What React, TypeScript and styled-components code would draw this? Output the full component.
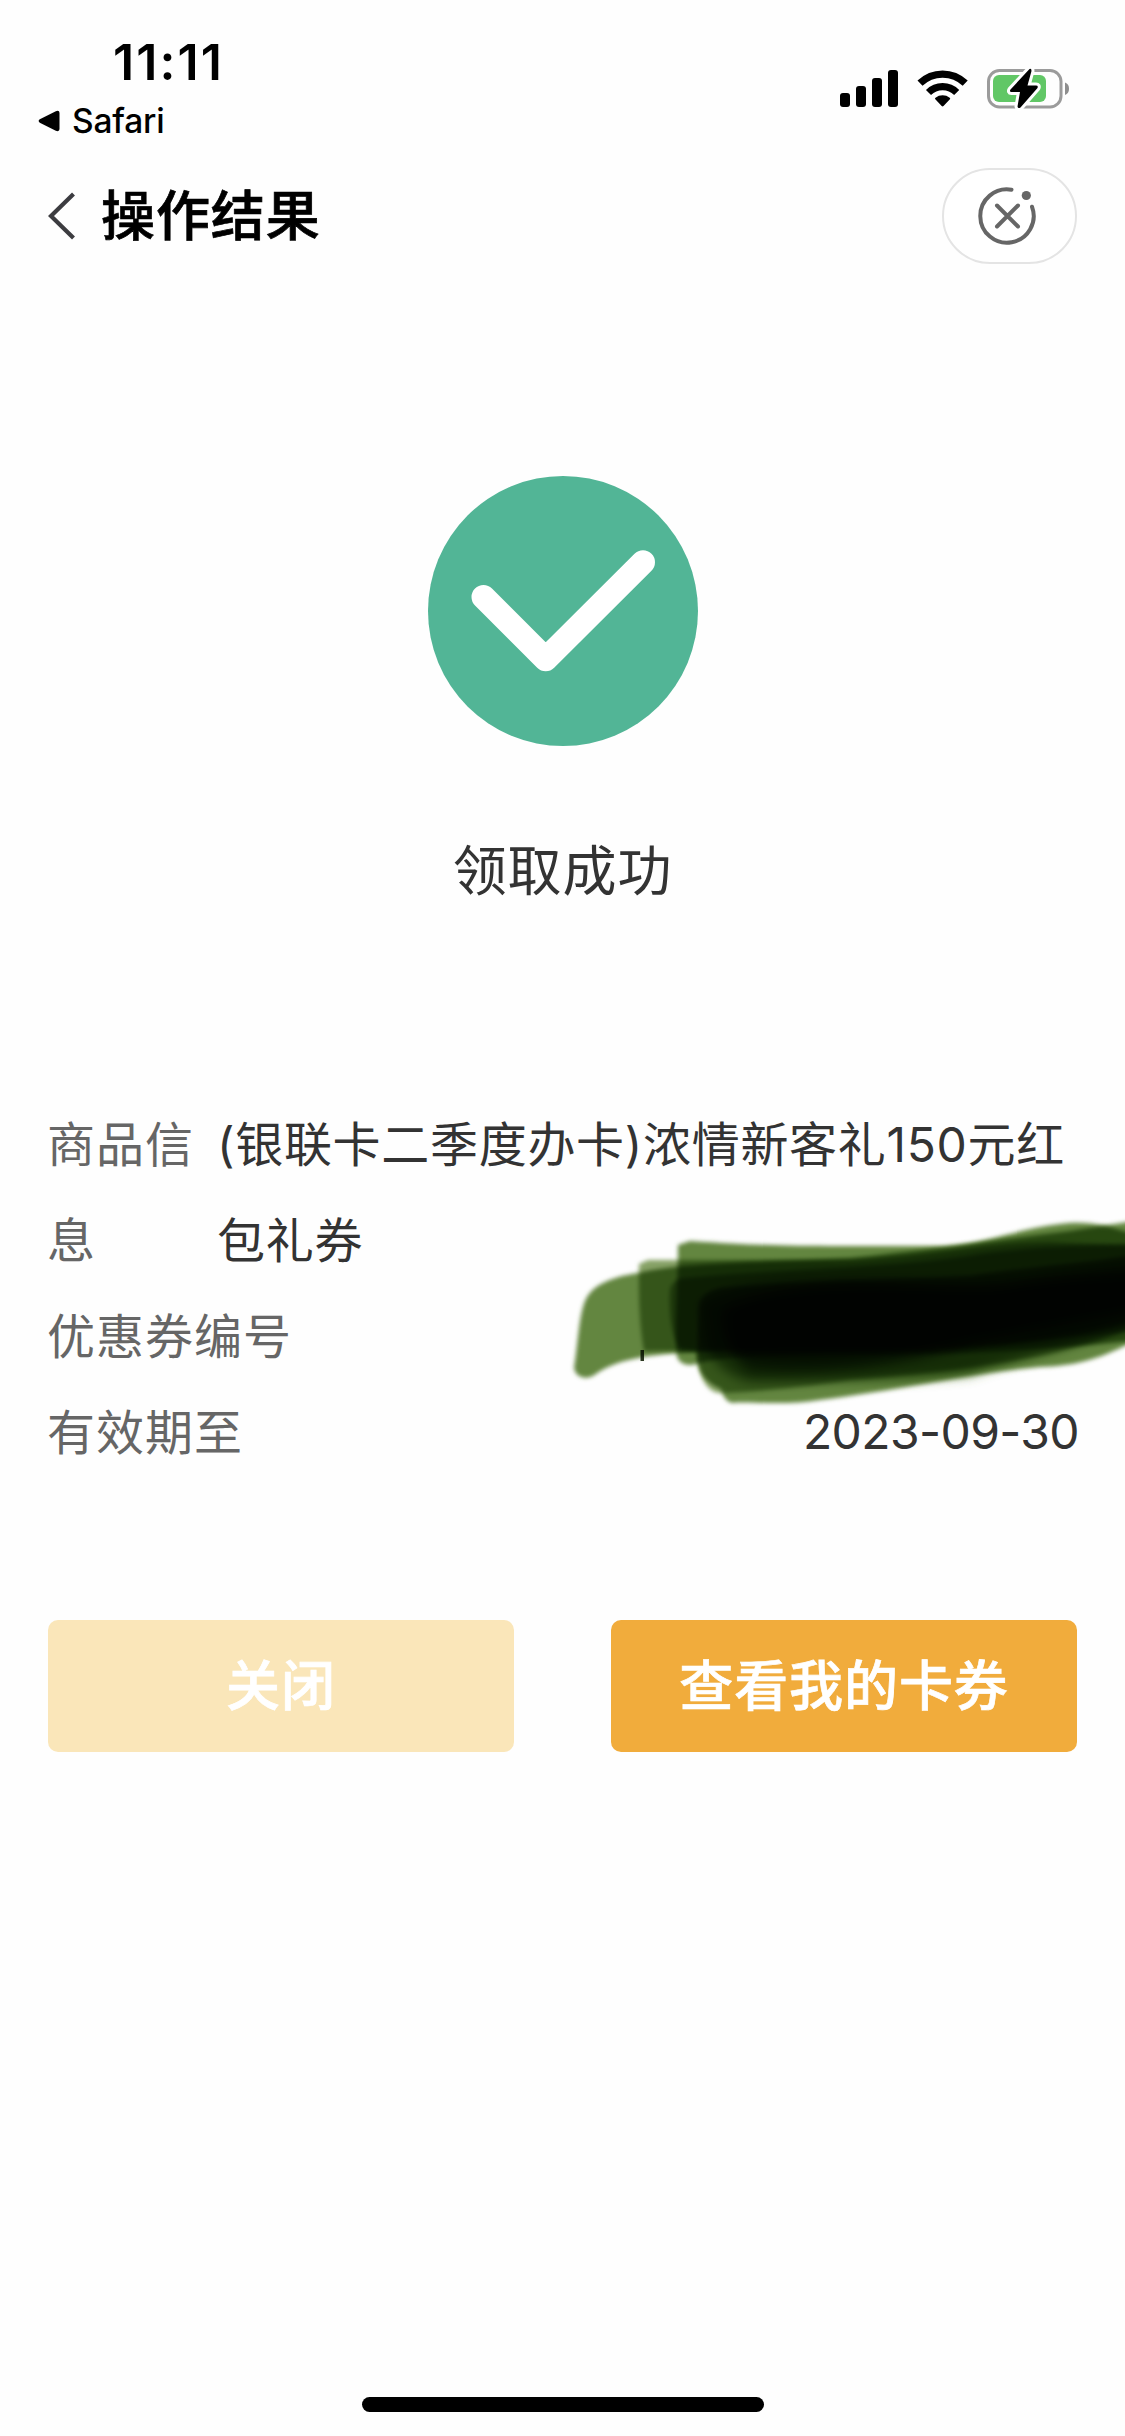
import React from 'react';
import styled, { createGlobalStyle } from 'styled-components';

const GlobalStyle = createGlobalStyle`
  * { box-sizing: border-box; }
  html, body { margin: 0; padding: 0; background: #fefefe; }
  body { font-family: Inter, "Noto Sans CJK SC", sans-serif; color: #333; }
`;

const Screen = styled.main`
  width: 1125px;
  height: 2436px;
  display: flex;
  flex-direction: column;
  background: #fefefe;
  overflow: hidden;
`;

const StatusBar = styled.header`
  display: flex;
  justify-content: space-between;
  align-items: flex-start;
  height: 150px;
  padding: 32px 55px 0 38px;
  color: #000;
`;

const StatusLeft = styled.div`
  display: flex;
  flex-direction: column;
`;

const Clock = styled.time`
  padding-left: 75px;
  font-size: 50px;
  font-weight: 600;
  line-height: 60px;
  letter-spacing: 2.1px;
`;

const BackToApp = styled.div`
  display: flex;
  align-items: center;
  gap: 12px;
  height: 56px;
  padding-top: 1px;
  font-size: 33.5px;
  font-weight: 450;
  line-height: 56px;
  letter-spacing: -0.2px;
`;

const StatusIcons = styled.div`
  display: flex;
  align-items: flex-start;
  padding-top: 36px;
`;

const NavBar = styled.nav`
  display: flex;
  align-items: center;
  height: 132px;
  padding: 0 48px;
`;

const Title = styled.h1`
  flex: 1;
  margin: 2px 0 0 25px;
  color: #000;
  font-size: 54px;
  font-weight: 500;
  line-height: 80px;
  letter-spacing: 0.9px;
  -webkit-text-stroke: 0.7px currentColor;
`;

const Capsule = styled.button`
  display: flex;
  align-items: center;
  justify-content: center;
  width: 135px;
  height: 96px;
  padding: 0 6px 0 0;
  border: 2px solid #e4e4e4;
  border-radius: 48px;
  background: #fff;
`;

const Result = styled.section`
  display: flex;
  flex-direction: column;
  align-items: center;
  padding-top: 194px;
  height: 815px;
`;

const ResultText = styled.p`
  margin: 86px 0 0;
  font-size: 54px;
  line-height: 80px;
  letter-spacing: 0.9px;
`;

const Details = styled.dl`
  position: relative;
  display: flex;
  flex-direction: column;
  margin: 0;
  padding: 0 48px 0 47px;
  font-size: 48px;
  line-height: 96px;
`;

const Row = styled.div`
  display: flex;
  justify-content: space-between;
`;

const Label = styled.dt<{ $width?: number }>`
  width: ${(p) => (p.$width ? `${p.$width}px` : 'auto')};
  flex: none;
  color: #666;
  letter-spacing: 1px;
`;

const Value = styled.dd<{ $wide?: boolean }>`
  margin: 0;
  width: ${(p) => (p.$wide ? '860px' : 'auto')};
  letter-spacing: 0.7px;
`;

const DateText = styled.time`
  display: block;
  margin: -1px -2px 0 0;
  font-size: 48px;
  letter-spacing: -0.6px;
`;

const Scribble = styled.svg`
  position: absolute;
  left: 560px;
  top: 103px;
  isolation: isolate;
  path { mix-blend-mode: multiply; }
`;

const Actions = styled.div`
  display: flex;
  gap: 97px;
  padding: 139px 48px 0;
`;

const ActionButton = styled.button<{ $muted?: boolean }>`
  flex: 1;
  height: 132px;
  padding: 0 0 7px;
  border: 0;
  border-radius: 10px;
  background: ${(p) => (p.$muted ? '#fae6b9' : '#f1ac3c')};
  color: #fff;
  font-family: inherit;
  font-size: 54px;
  font-weight: 500;
  letter-spacing: 0.9px;
  -webkit-text-stroke: 0.7px currentColor;
`;

const HomeIndicator = styled.div`
  width: 402px;
  height: 15px;
  margin: auto auto 24px;
  border-radius: 8px;
  background: #000;
`;

const StatusGlyphs = () => (
  <svg width="230" height="44" viewBox="0 0 230 44">
    <rect x="0" y="25" width="10" height="14" rx="3" />
    <rect x="16" y="18" width="10" height="21" rx="3" />
    <rect x="32" y="10" width="10" height="29" rx="3" />
    <rect x="48" y="2" width="10" height="37" rx="3" />
    <g fill="none" stroke="#000" strokeWidth="7.2">
      <path d="M80 15.2A32.5 32.5 0 0 1 125.200 15.200" />
      <path d="M88.500 24.500A20 20 0 0 1 116.700 24.500" />
    </g>
    <path d="M95.300 31.300Q94.500 30.500 95.500 29.700A11.500 11.500 0 0 1 109.700 29.700Q110.700 30.500 109.900 31.300L103.500 38Q102.600 38.800 101.700 38Z" />
    <rect x="148.500" y="2.500" width="72.500" height="36.500" rx="11" fill="none" stroke="#9b9b9b" strokeWidth="3" />
    <path d="M225 14.500Q229 16 229 20.700Q229 25.500 225 27Z" fill="#8e8e8e" />
    <rect x="153" y="7" width="53" height="27" rx="6" fill="#61c766" />
    <path
      d="M189.500 1L170.500 21.500Q169 24 171.500 24H180L177.500 38.500Q178 41 180.500 39.500L197.500 20Q198.500 17.500 196 17.500H187.500L191.500 3Q191.500 0 189.500 1Z"
      stroke="#fff"
      strokeWidth="6"
      paintOrder="stroke"
      strokeLinejoin="round"
    />
  </svg>
);

const BackTriangle = () => (
  <svg width="22" height="22" viewBox="0 0 22 22">
    <path d="M1.800 9.300L17.800 1.200Q21.500 0 21.500 3V19Q21.500 22 17.800 20.800L1.800 12.700Q-.5 11 1.800 9.300Z" />
  </svg>
);

const Chevron = () => (
  <svg width="28" height="48" viewBox="0 0 28 48" fill="none" stroke="#3c3c40" strokeWidth="4.200">
    <path d="M25.500 2L3 24L25.500 46" />
  </svg>
);

const CloseRing = () => (
  <svg width="60" height="60" viewBox="-30 -30 60 60" fill="none" stroke="#666" strokeWidth="4" strokeLinecap="round">
    <path d="M4.500 -26.300A26.700 26.700 0 1 0 25 -9.300" />
    <path d="M-10 -10.500L11 10.500M11 -10.500L-10 10.500" />
    <circle cx="19.300" cy="-20.500" r="4.600" fill="#666" stroke="none" />
  </svg>
);

const SuccessMark = () => (
  <svg width="270" height="270" viewBox="0 0 270 270">
    <circle cx="135" cy="135" r="135" fill="#52b596" />
    <path
      d="M55.500 121L117.700 183.300L215 86.300"
      fill="none"
      stroke="#fff"
      strokeWidth="24"
      strokeLinecap="round"
      strokeLinejoin="round"
    />
  </svg>
);

const MarkerStrokes = () => (
  <Scribble width="566" height="220" viewBox="0 0 566 220" fill="#64863f">
    <defs>
      <filter id="soft" x="-10%" y="-20%" width="120%" height="140%">
        <feGaussianBlur stdDeviation="2" />
      </filter>
      <filter id="softer" x="-10%" y="-20%" width="120%" height="140%">
        <feGaussianBlur stdDeviation="6" />
      </filter>
    </defs>
    <rect x="80.500" y="150" width="3.500" height="11" fill="#2e3a24" />
    <path filter="url(#soft)" d="M14 168C18 145 19 110 27 97C35 84 52 77 78 73C120 62 210 62 290 58C370 50 450 38 510 31L580 20V120C480 145 400 152 290 150C200 152 150 148 90 156C60 160 44 168 36 174C28 180 16 179 14 168Z" />
    <path filter="url(#soft)" fill="#87a266" d="M79 64L88 60H290C380 56 430 42 490 42L580 46V130C500 140 400 150 290 150L84 151Q78 120 79 64Z" />
    <path filter="url(#soft)" d="M118 45L130 41C180 44 210 46 270 46H385C425 44 460 28 500 24C530 20 548 26 580 36V140C480 150 400 155 290 155C200 155 150 158 137 164Q122 168 117 157C114 130 118 90 118 45Z" />
    <path filter="url(#soft)" fill="#87a266" d="M110 90Q112 79 125 78C230 68 340 68 420 54C480 46 520 46 580 44V125C500 158 420 170 290 180Q200 193 158 193C145 190 138 174 137 152L120 149Q108 130 110 90Z" />
    <path filter="url(#soft)" d="M139 105Q142 92 160 88C250 80 330 80 410 76C470 66 520 64 580 54V138C540 160 515 166 480 167C420 172 330 192 260 200C225 206 185 201 173 203Q164 202 161 189C146 183 137 172 137 155Z" />
    <path filter="url(#softer)" d="M140 102Q170 86 220 82C320 76 410 84 470 76C520 70 540 68 600 60V112C520 150 450 160 410 175C350 181 260 182 190 182Q158 174 145 145Z" />
    <path filter="url(#softer)" d="M165 108Q200 88 280 84C350 82 400 90 440 86C490 78 540 72 600 70V108C520 125 460 135 410 145C350 165 270 178 190 172Q160 150 165 108Z" />
    <path filter="url(#softer)" d="M160 110Q200 92 280 88C350 86 400 92 440 88C490 80 540 76 600 76V104C520 120 460 130 410 140C350 155 270 170 190 160Q160 150 160 110Z" />
  </Scribble>
);

export default function App() {
  return (
    <>
      <GlobalStyle />
      <Screen>
        <StatusBar>
          <StatusLeft>
            <Clock>11:11</Clock>
            <BackToApp>
              <BackTriangle />
              Safari
            </BackToApp>
          </StatusLeft>
          <StatusIcons>
            <StatusGlyphs />
          </StatusIcons>
        </StatusBar>
        <NavBar>
          <Chevron />
          <Title>操作结果</Title>
          <Capsule aria-label="关闭">
            <CloseRing />
          </Capsule>
        </NavBar>
        <Result>
          <SuccessMark />
          <ResultText>领取成功</ResultText>
        </Result>
        <Details>
          <Row>
            <Label $width={150}>商品信息</Label>
            <Value $wide>(银联卡二季度办卡)浓情新客礼150元红包礼券</Value>
          </Row>
          <Row>
            <Label>优惠券编号</Label>
          </Row>
          <Row>
            <Label>有效期至</Label>
            <Value>
              <DateText>2023-09-30</DateText>
            </Value>
          </Row>
          <MarkerStrokes />
        </Details>
        <Actions>
          <ActionButton $muted>关闭</ActionButton>
          <ActionButton>查看我的卡券</ActionButton>
        </Actions>
        <HomeIndicator />
      </Screen>
    </>
  );
}
